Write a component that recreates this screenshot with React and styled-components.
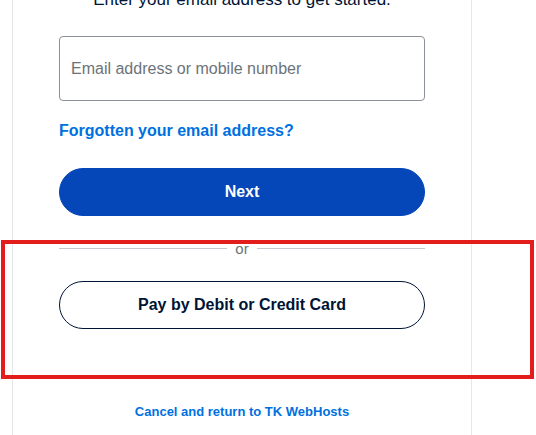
import React from 'react'
import styled, { createGlobalStyle } from 'styled-components'

const Global = createGlobalStyle`
  html, body {
    margin: 0;
    background: #ffffff;
    overflow: hidden;
  }
  body {
    font-family: "Liberation Sans", Arial, sans-serif;
  }
`

const Page = styled.div`
  position: relative;
  height: 435px;
  padding-left: 12px;
  overflow: hidden;
`

const Card = styled.div`
  box-sizing: border-box;
  width: 460px;
  min-height: 460px;
  margin-top: -12px;
  padding: 0 46px;
  border-left: 1px solid #e6e7e8;
  border-right: 1px solid #e6e7e8;
  display: flex;
  flex-direction: column;
`

const Heading = styled.p`
  margin: 0;
  font-size: 17px;
  line-height: 24px;
  color: #001435;
  text-align: center;
`

const Input = styled.input`
  box-sizing: border-box;
  width: 100%;
  height: 65px;
  margin-top: 24px;
  padding: 0 11px;
  border: 1px solid #8c9097;
  border-radius: 4px;
  font-family: inherit;
  font-size: 16px;
  color: #001435;
  outline: none;

  &::placeholder {
    color: #6c7378;
  }
`

const TextLink = styled.a`
  display: block;
  color: #0070e0;
  font-weight: bold;
  text-decoration: none;
  font-size: ${p => p.$size || 16}px;
  text-align: ${p => p.$center ? 'center' : 'left'};
  margin-top: ${p => p.$top || 0}px;
  line-height: 20px;
`

const Button = styled.button`
  box-sizing: border-box;
  width: 100%;
  height: 48px;
  border-radius: 24px;
  font-family: inherit;
  font-size: 16px;
  font-weight: bold;
  cursor: pointer;
  margin-top: ${p => p.$top || 0}px;
  background: ${p => p.$primary ? '#0546b9' : '#ffffff'};
  color: ${p => p.$primary ? '#ffffff' : '#001435'};
  border: 1px solid ${p => p.$primary ? '#0546b9' : '#001435'};
`

const Divider = styled.div`
  display: flex;
  align-items: center;
  gap: 8px;
  margin-top: 23px;
  height: 18px;
  color: #6c7378;
  font-size: 15px;

  &::before, &::after {
    content: '';
    flex: 1;
    height: 1px;
    background: #c4c8cc;
  }
`

const Highlight = styled.div`
  position: absolute;
  left: 1px;
  top: 240px;
  width: 533px;
  height: 139px;
  box-sizing: border-box;
  border: 4px solid #e31c1c;
  pointer-events: none;
`

export default function App() {
  return (
    <>
      <Global />
      <Page>
        <Card>
          <Heading>Enter your email address to get started.</Heading>
          <Input placeholder="Email address or mobile number" />
          <TextLink href="#" $top={20}>Forgotten your email address?</TextLink>
          <Button $primary $top={27}>Next</Button>
          <Divider>or</Divider>
          <Button $top={24}>Pay by Debit or Credit Card</Button>
          <TextLink href="#" $size={13} $center $top={73}>Cancel and return to TK WebHosts</TextLink>
        </Card>
        <Highlight />
      </Page>
    </>
  )
}
